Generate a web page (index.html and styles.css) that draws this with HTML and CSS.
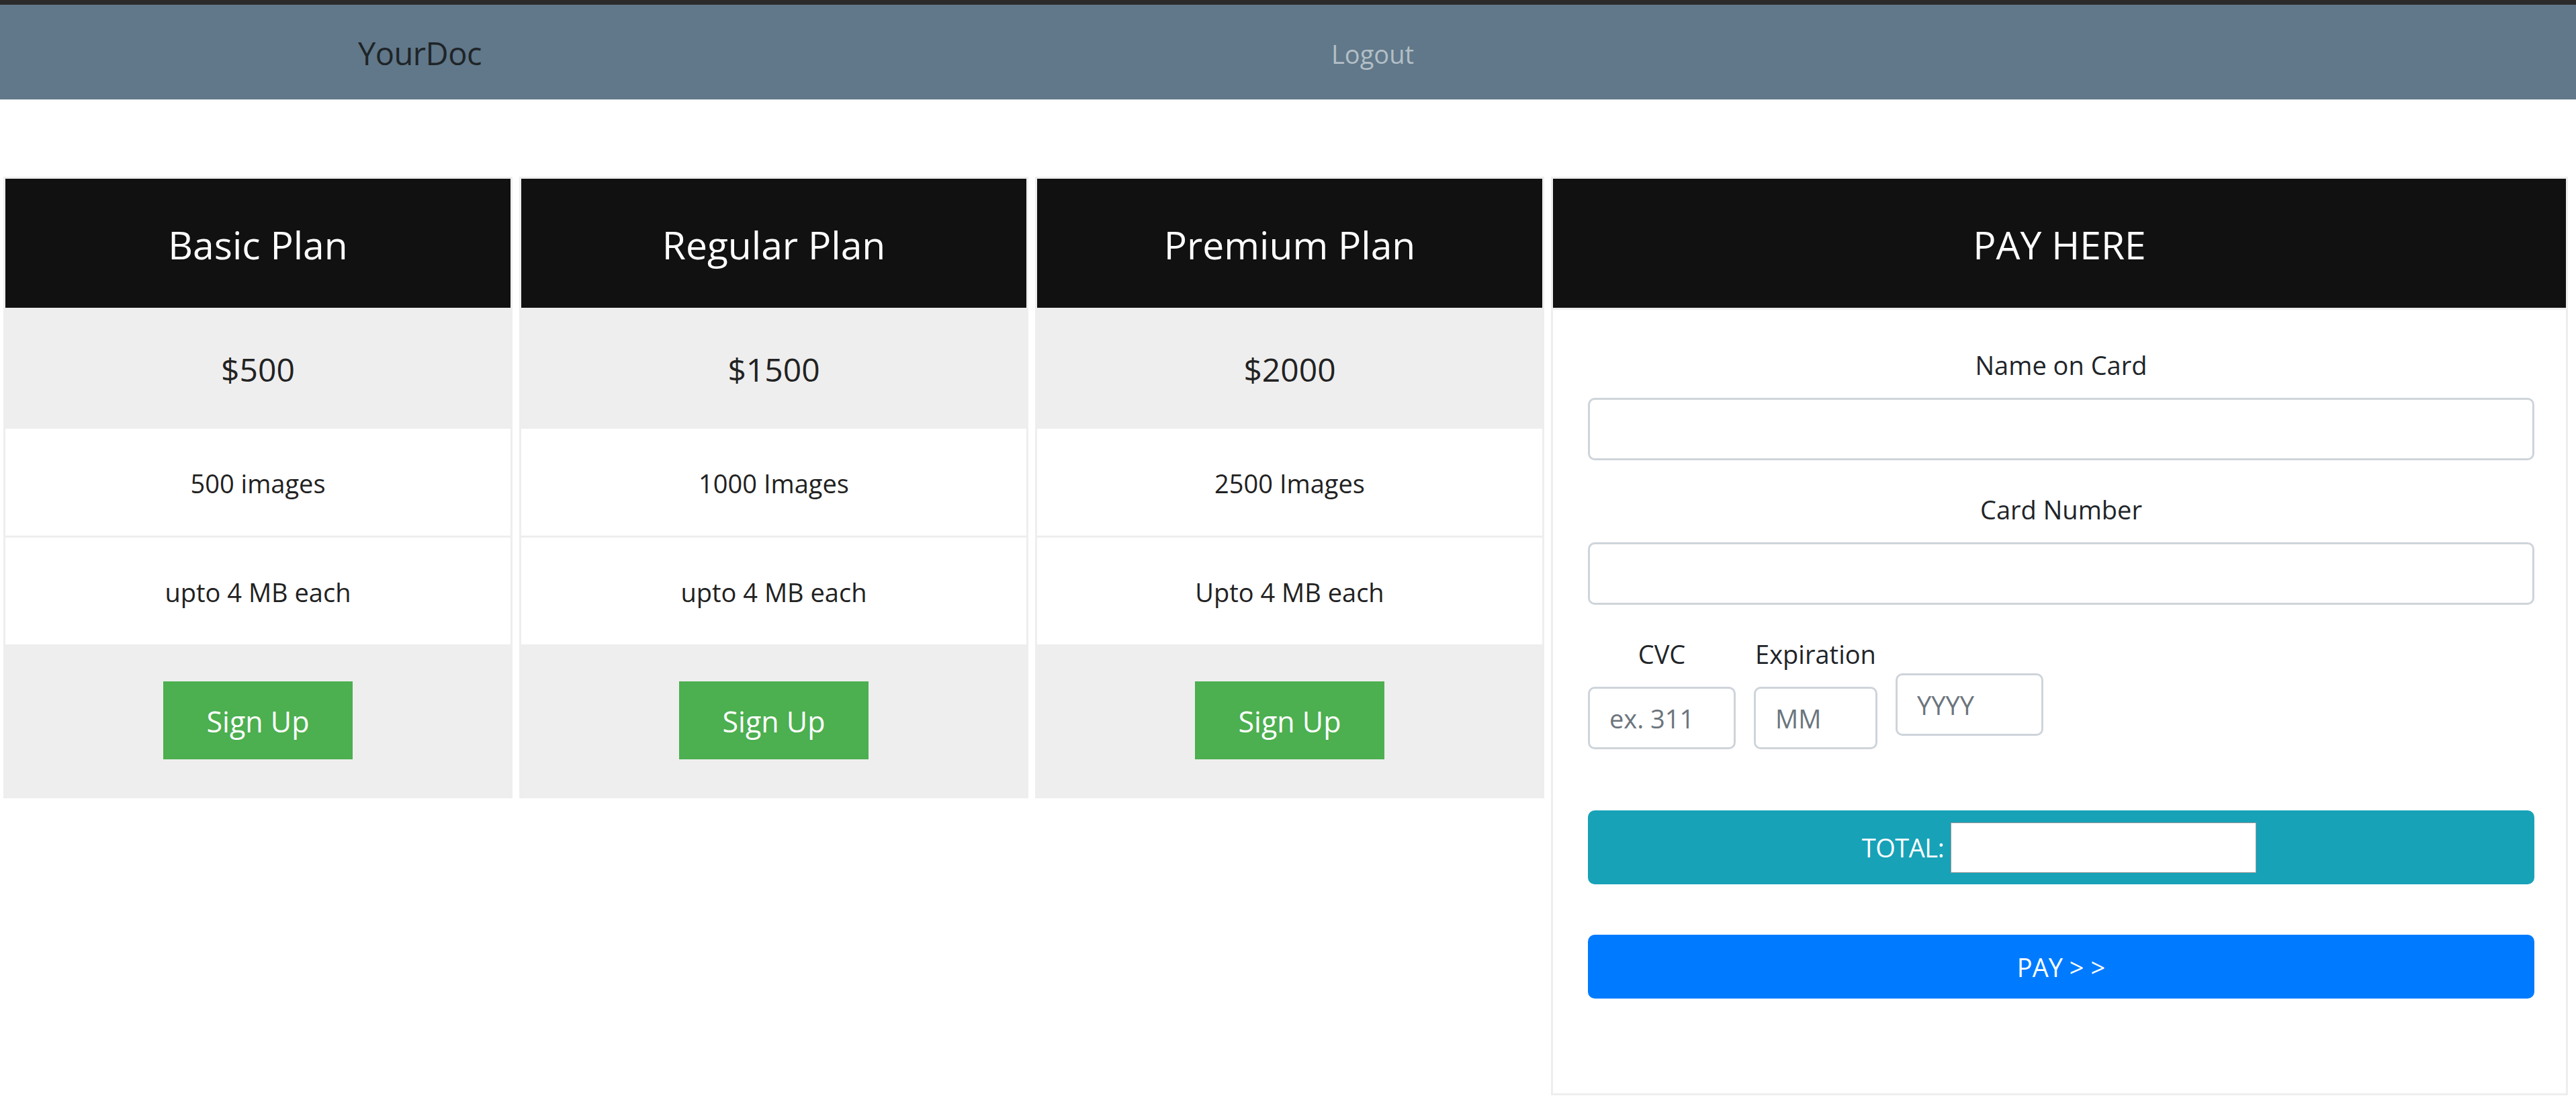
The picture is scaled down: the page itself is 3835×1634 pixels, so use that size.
FILE: index.html
```html
<!DOCTYPE html>
<html lang="en">
<head>
<meta charset="utf-8">
<title>YourDoc – Plans</title>
<link rel="stylesheet" href="styles.css">
</head>
<body>
<div class="topbar"></div>
<nav class="navbar">
  <span class="brand">YourDoc</span>
  <a class="nav-link" href="#">Logout</a>
</nav>
<main class="plans">
  <ul class="plan">
    <li class="plan-head">Basic Plan</li>
    <li class="plan-price">$500</li>
    <li class="plan-feature plan-feature-first">500 images</li>
    <li class="plan-feature">upto 4 MB each</li>
    <li class="plan-action"><button class="btn-signup" type="button">Sign Up</button></li>
  </ul>
  <ul class="plan">
    <li class="plan-head">Regular Plan</li>
    <li class="plan-price">$1500</li>
    <li class="plan-feature plan-feature-first">1000 Images</li>
    <li class="plan-feature">upto 4 MB each</li>
    <li class="plan-action"><button class="btn-signup" type="button">Sign Up</button></li>
  </ul>
  <ul class="plan">
    <li class="plan-head">Premium Plan</li>
    <li class="plan-price">$2000</li>
    <li class="plan-feature plan-feature-first">2500 Images</li>
    <li class="plan-feature">Upto 4 MB each</li>
    <li class="plan-action"><button class="btn-signup" type="button">Sign Up</button></li>
  </ul>
  <section class="pay">
    <div class="pay-head">PAY HERE</div>
    <form class="pay-body">
      <div class="form-group">
        <label class="field-label">Name on Card</label>
        <input class="form-control" type="text">
      </div>
      <div class="form-group">
        <label class="field-label">Card Number</label>
        <input class="form-control" type="text">
      </div>
      <div class="small-row">
        <div class="small-col">
          <label class="field-label">CVC</label>
          <input class="form-control input-cvc" type="text" placeholder="ex. 311">
        </div>
        <div class="small-col">
          <label class="field-label">Expiration</label>
          <input class="form-control input-mm" type="text" placeholder="MM">
        </div>
        <input class="form-control input-yyyy" type="text" placeholder="YYYY">
      </div>
      <div class="total-bar">
        <span class="total-label">TOTAL:</span>
        <input class="total-input" type="text">
      </div>
      <button class="btn-pay" type="button">PAY &gt; &gt;</button>
    </form>
  </section>
</main>
</body>
</html>
```
FILE: styles.css
```css
* {
  box-sizing: border-box;
}

html, body {
  margin: 0;
  padding: 0;
  background: #ffffff;
}

body {
  font-family: "Open Sans", "Noto Sans", "Liberation Sans", sans-serif;
  color: #212529;
  font-size: 39px;
  line-height: 1.5;
}

.topbar {
  height: 7px;
  background: #2b2b2b;
}

.navbar {
  height: 141px;
  background: #607889;
  display: grid;
  grid-template-columns: 533px 1449px auto;
  align-items: center;
  padding-top: 4px;
}

.brand {
  grid-column: 2;
  font-size: 47px;
  color: #1f2428;
  line-height: 1;
  letter-spacing: -0.5px;
}

.nav-link {
  grid-column: 3;
  font-size: 38px;
  color: #b3bec6;
  text-decoration: none;
  line-height: 1;
}

.plans {
  display: flex;
  align-items: flex-start;
  gap: 10px;
  padding-left: 5px;
  margin-top: 115px;
}

.plan {
  list-style: none;
  margin: 0;
  padding: 0;
  width: 758px;
  border: 3px solid #eeeeee;
  background: #eeeeee;
  text-align: center;
}

.plan li {
  display: flex;
  align-items: center;
  justify-content: center;
}

.plan-head {
  height: 192px;
  background: #111111;
  color: #ffffff;
  font-size: 57px;
  padding-top: 6px;
}

.plan-price {
  height: 180px;
  background: #eeeeee;
  color: #222222;
  font-size: 48px;
  padding-top: 4px;
}

.plan-feature {
  height: 159px;
  background: #ffffff;
  color: #222222;
  font-size: 38px;
  padding-top: 4px;
}

.plan-feature-first {
  border-bottom: 3px solid #eeeeee;
  height: 162px;
}

.plan-action {
  height: 226px;
  background: #eeeeee;
}

.btn-signup {
  width: 282px;
  height: 116px;
  border: none;
  background: #4caf50;
  color: #ffffff;
  font-family: inherit;
  font-size: 43px;
  padding-top: 4px;
  cursor: pointer;
}

.pay {
  width: 1514px;
  border: 3px solid #eeeeee;
  background: #ffffff;
}

.pay-head {
  height: 195px;
  background: #111111;
  color: #ffffff;
  font-size: 57px;
  border-bottom: 3px solid #eeeeee;
  display: flex;
  align-items: center;
  justify-content: center;
  padding-top: 6px;
}

.pay-body {
  padding: 53px 47px 141px 52px;
  margin: 0;
}

.form-group {
  display: flex;
  flex-direction: column;
  margin-bottom: 44px;
}

.field-label {
  display: block;
  height: 58px;
  line-height: 58px;
  margin-bottom: 20px;
  text-align: center;
  font-size: 38px;
  color: #212529;
}

.form-control {
  display: block;
  height: 93px;
  width: 100%;
  border: 3px solid #ced4da;
  border-radius: 10px;
  padding: 0 29px;
  font-family: inherit;
  font-size: 38px;
  color: #495057;
  background: #ffffff;
}

.form-control::placeholder {
  color: #6c757d;
}

.small-row {
  display: flex;
  align-items: flex-start;
  gap: 27px;
}

.small-col {
  display: flex;
  flex-direction: column;
}

.input-cvc {
  width: 220px;
}

.input-mm {
  width: 184px;
}

.input-yyyy {
  width: 220px;
  margin-top: 58px;
}

.total-bar {
  margin-top: 91px;
  height: 110px;
  background: #17a2b8;
  border-radius: 10px;
  display: flex;
  align-items: center;
  justify-content: center;
  gap: 10px;
  color: #ffffff;
  font-size: 38px;
  padding-right: 6px;
}

.total-label {
  line-height: 1;
  letter-spacing: -0.5px;
}

.total-input {
  width: 455px;
  height: 75px;
  border: 1px solid #9a9a9a;
  background: #ffffff;
  font-family: inherit;
  font-size: 38px;
}

.btn-pay {
  display: block;
  width: 100%;
  height: 95px;
  margin-top: 75px;
  border: none;
  border-radius: 10px;
  background: #007bff;
  color: #ffffff;
  font-family: inherit;
  font-size: 38px;
  cursor: pointer;
}
```
